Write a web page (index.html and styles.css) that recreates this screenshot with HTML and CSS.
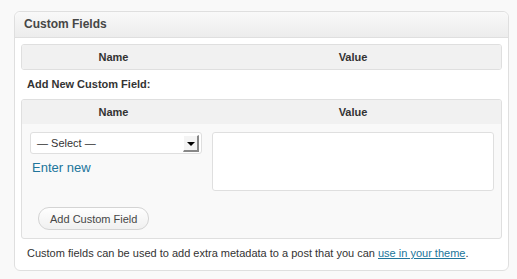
FILE: index.html
```html
<!DOCTYPE html>
<html lang="en">
<head>
    <meta charset="UTF-8">
    <title>Custom Fields</title>
    <link rel="stylesheet" href="styles.css">
</head>
<body>
    <div class="postbox">
        <h3 class="hndle">Custom Fields</h3>
        <div class="inside">
            <!-- existing fields -->
            <div class="meta-table">
                <div class="meta-head">
                    <div class="col-name">Name</div>
                    <div class="col-value">Value</div>
                </div>
            </div>

            <p class="add-new">Add New Custom Field:</p>

            <!-- new field form -->
            <div class="meta-table new-meta">
                <div class="meta-head">
                    <div class="col-name">Name</div>
                    <div class="col-value">Value</div>
                </div>
                <div class="meta-body">
                    <div class="col-name cell-left">
                        <div class="select-box">
                            <span>&mdash; Select &mdash;</span>
                            <span class="select-arrow"></span>
                        </div>
                        <a class="enter-new" href="#">Enter new</a>
                    </div>
                    <div class="col-value cell-right">
                        <div class="textarea"></div>
                    </div>
                </div>
                <div class="submit-row">
                    <button class="button">Add Custom Field</button>
                </div>
            </div>

            <p class="howto">Custom fields can be used to add extra metadata to a post that you can <a href="#">use in your theme</a>.</p>
        </div>
    </div>
</body>
</html>
```

FILE: styles.css
```css
/* Page */
body {
    margin: 0;
    padding: 11px 8px 0 14px;
    background: #f9f9f9;
    font-family: 'Liberation Sans', Arial, sans-serif;
    color: #333;
}

.postbox {
    width: 493px;
    background: #fff;
    border: 1px solid #dfdfdf;
    border-radius: 6px;
}

.hndle {
    margin: 0;
    height: 25px;
    padding: 0 9px;
    font-size: 12px;
    line-height: 25px;
    font-weight: bold;
    color: #464646;
    background: linear-gradient(to bottom, #f9f9f9, #ececec);
    border-bottom: 1px solid #dfdfdf;
    border-radius: 6px 6px 0 0;
}

.inside {
    padding: 6px 6px 0;
}

/* Tables */
.meta-table {
    border: 1px solid #dfdfdf;
    border-radius: 3px;
    overflow: hidden;
}

.meta-head {
    display: flex;
    height: 24px;
    background: #f1f1f1;
    font-size: 11px;
    font-weight: bold;
    line-height: 24px;
    text-align: center;
}

.col-name {
    width: 183px;
}

.col-value {
    flex: 1;
}

.add-new {
    margin: 0;
    height: 29px;
    padding-left: 6px;
    font-size: 11px;
    font-weight: bold;
    line-height: 28px;
}

.new-meta {
    background: #f9f9f9;
}

.new-meta .meta-head {
    border-bottom: 0;
}

.meta-body {
    display: flex;
    padding-top: 8px;
}

.cell-left {
    padding-left: 8px;
    padding-right: 3px;
    display: flex;
    flex-direction: column;
    box-sizing: border-box;
}

.cell-right {
    padding: 0 7px 0 7px;
}

/* Select */
.select-box {
    display: flex;
    align-items: center;
    justify-content: space-between;
    height: 20px;
    padding: 0 2px 0 6px;
    background: #fff;
    border: 1px solid #dfdfdf;
    border-radius: 3px;
    font-size: 11px;
    color: #333;
}

.select-arrow {
    position: relative;
    width: 13px;
    height: 14px;
    background: #f4f4f4;
    border-top: 1px solid #fff;
    border-left: 1px solid #fff;
    border-right: 2px solid #888;
    border-bottom: 2px solid #888;
}

.select-arrow::after {
    content: '';
    position: absolute;
    left: 3px;
    top: 6px;
    border-left: 4px solid transparent;
    border-right: 4px solid transparent;
    border-top: 4px solid #000;
}

.enter-new {
    margin-top: 6px;
    padding-left: 2px;
    font-size: 13px;
    line-height: 16px;
    color: #21759b;
    text-decoration: none;
}

.textarea {
    height: 57px;
    background: #fff;
    border: 1px solid #dfdfdf;
    border-radius: 3px;
}

.submit-row {
    padding: 16px 0 8px 16px;
}

.button {
    height: 23px;
    padding: 0 11px;
    font-family: 'Liberation Sans', Arial, sans-serif;
    font-size: 11px;
    color: #464646;
    background: linear-gradient(to bottom, #fefefe, #f0f0f0);
    border: 1px solid #d4d4d4;
    border-radius: 11px;
}

.howto {
    margin: 0;
    padding: 6px 6px 9px;
    font-size: 11px;
    line-height: 16px;
    color: #333;
}

.howto a {
    color: #21759b;
}
```
